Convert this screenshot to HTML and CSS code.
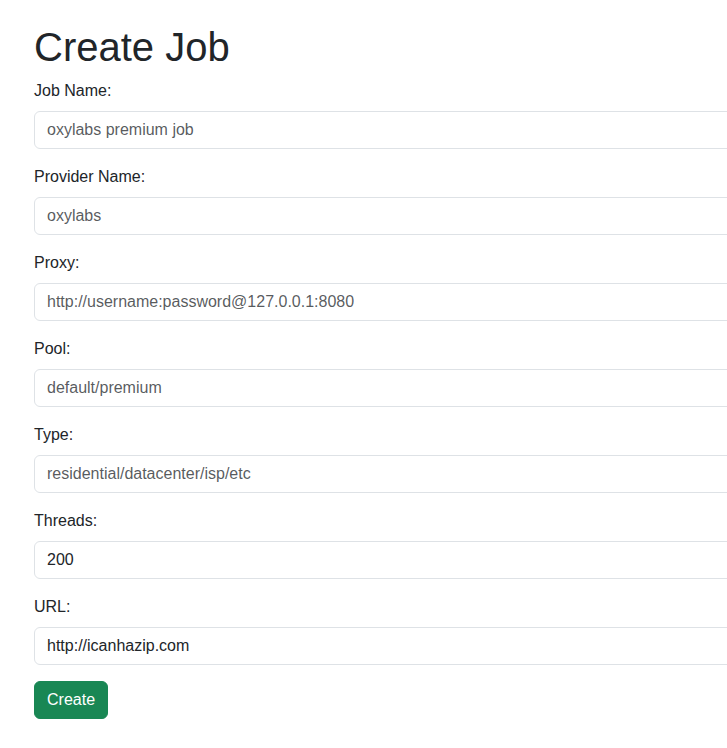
FILE: index.html
```html
<!DOCTYPE html>
<html lang="en">
<head>
<meta charset="utf-8">
<title>Create Job</title>
<link rel="stylesheet" href="styles.css">
</head>
<body>
<div class="container">
  <h1 class="title">Create Job</h1>
  <form class="form">
    <div class="field">
      <label class="label" for="job">Job Name:</label>
      <input class="control" id="job" type="text" placeholder="oxylabs premium job">
    </div>
    <div class="field">
      <label class="label" for="provider">Provider Name:</label>
      <input class="control" id="provider" type="text" placeholder="oxylabs">
    </div>
    <div class="field">
      <label class="label" for="proxy">Proxy:</label>
      <input class="control" id="proxy" type="text" placeholder="http://username:password@127.0.0.1:8080">
    </div>
    <div class="field">
      <label class="label" for="pool">Pool:</label>
      <input class="control" id="pool" type="text" placeholder="default/premium">
    </div>
    <div class="field">
      <label class="label" for="type">Type:</label>
      <input class="control" id="type" type="text" placeholder="residential/datacenter/isp/etc">
    </div>
    <div class="field">
      <label class="label" for="threads">Threads:</label>
      <input class="control" id="threads" type="text" value="200">
    </div>
    <div class="field">
      <label class="label" for="url">URL:</label>
      <input class="control" id="url" type="text" value="http://icanhazip.com">
    </div>
    <button class="btn" type="submit">Create</button>
  </form>
</div>
</body>
</html>
```
FILE: styles.css
```css
html {
  overflow: hidden;
}
body {
  margin: 0;
  font-family: "Liberation Sans", Arial, sans-serif;
  font-size: 16px;
  line-height: 1.5;
  color: #212529;
  background: #fff;
}
.container {
  padding: 23px 0 0 34px;
  width: 900px;
}
.title {
  margin: 0 0 8px;
  font-size: 40px;
  font-weight: 500;
  line-height: 1.2;
}
.form {
  display: flex;
  flex-direction: column;
  align-items: flex-start;
}
.field {
  display: flex;
  flex-direction: column;
  align-self: stretch;
  margin-bottom: 16px;
}
.label {
  margin-bottom: 8px;
  line-height: 24px;
}
.control {
  box-sizing: border-box;
  height: 38px;
  width: 100%;
  padding: 6px 12px;
  font-family: inherit;
  font-size: 16px;
  line-height: 1.5;
  color: #212529;
  background: #fff;
  border: 1px solid #dee2e6;
  border-radius: 6px;
  outline: none;
}
.control::placeholder {
  color: rgba(33, 37, 41, 0.75);
  opacity: 1;
}
.btn {
  box-sizing: border-box;
  height: 38px;
  padding: 6px 12px;
  font-family: inherit;
  font-size: 16px;
  line-height: 1.5;
  color: #fff;
  background: #198754;
  border: 1px solid #198754;
  border-radius: 6px;
  cursor: pointer;
}
```
